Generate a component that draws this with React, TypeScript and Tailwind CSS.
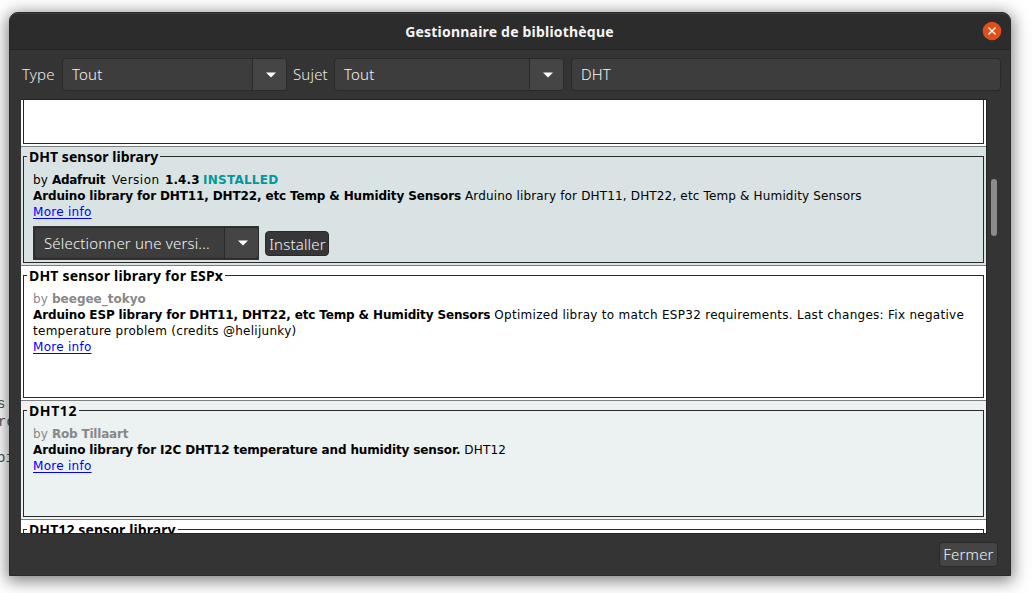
import React from 'react';

const UI = "font-['Noto_Sans','Open_Sans',sans-serif] font-light text-[15px] tracking-[0.17px]";

function Arrow() {
  return (
    <svg width="10" height="6" viewBox="0 0 10 6" className="block">
      <path d="M0 0.5H10L5 5.5Z" fill="#fff" />
    </svg>
  );
}

function Combo({ label, className }: { label: string; className: string }) {
  return (
    <div className={`flex shrink-0 rounded-[4px] border border-[#292929] bg-[#3d3d3d] text-[#f5f5f5] ${className}`}>
      <div className="min-w-0 flex-1 overflow-hidden whitespace-nowrap pl-[9px] leading-[31px]">{label}</div>
      <div className="flex w-[34px] items-center justify-center rounded-r-[3px] border-l border-[#292929] bg-[#454545] pl-[3px]">
        <Arrow />
      </div>
    </div>
  );
}

function B({ children, className = 'tracking-[-0.135px]' }: { children: React.ReactNode; className?: string }) {
  return <b className={`font-bold ${className}`}>{children}</b>;
}

function Row({
  title,
  titleClass,
  className,
  children,
}: {
  title: string;
  titleClass: string;
  className: string;
  children?: React.ReactNode;
}) {
  return (
    <div className={`relative flex shrink-0 flex-col border-b border-[#7c7f7f] px-[2px] pb-[2px] pt-[9px] ${className}`}>
      <div className="flex-1 border border-[#2a2a2a] pl-[9px] pt-[15px] text-[12px] leading-[16px] tracking-[0.16px] text-black">
        {children}
      </div>
      <div
        className={`absolute left-[6px] top-0 bg-inherit px-[2px] font-['Noto_Sans','Open_Sans',sans-serif] text-[14px] font-bold leading-[20px] text-black ${titleClass}`}
      >
        {title}
      </div>
    </div>
  );
}

function MoreInfo() {
  return (
    <div>
      <a className="tracking-[0.28px] text-[#0000ff] underline underline-offset-[2px]">More info</a>
    </div>
  );
}

export default function App() {
  return (
    <div className="relative h-[593px] w-[1034px] overflow-hidden bg-white pl-[9px] pt-[12px]">
      <div className="absolute left-[-3px] top-[395px] font-['Liberation_Mono',monospace] text-[14px] leading-[18px] text-[#4a5560]">
        <div>s</div>
        <div className="pl-px">ro</div>
        <div>&nbsp;</div>
        <div>oi</div>
      </div>

      <div className="relative flex h-[564px] w-[1002px] flex-col rounded-t-[9px] border border-[#2a2a2a] bg-[#343434] shadow-[0_3px_16px_2px_rgba(0,0,0,0.5)]">
        <div className="relative flex h-[37px] shrink-0 items-center justify-center rounded-t-[8px] border-b border-t border-b-[#232323] border-t-[#3c3c3c] bg-[#2c2c2c]">
          <div className="pr-px font-['Noto_Sans','Open_Sans',sans-serif] text-[14px] font-bold tracking-[0.2px] text-[#f5f5f5]">
            Gestionnaire de bibliothèque
          </div>
          <svg width="20" height="20" viewBox="0 0 20 20" className="absolute right-[8px] top-[7px]">
            <circle cx="10" cy="10" r="9.3" fill="#e24e1b" />
            <path d="M6.4 6.4L13.6 13.6M13.6 6.4L6.4 13.6" stroke="#fff" strokeWidth="1.4" />
          </svg>
        </div>

        <div className={`flex h-[49px] shrink-0 items-center pl-[12px] pr-[9px] text-[#ececec] ${UI}`}>
          <span className="w-[40px]">Type</span>
          <Combo label="Tout" className="h-[33px] w-[225px]" />
          <span className="w-[47px] pl-[6px]">Sujet</span>
          <Combo label="Tout" className="h-[33px] w-[230px]" />
          <div className="ml-[7px] h-[33px] flex-1 rounded-[4px] border border-[#292929] bg-[#3d3d3d] pl-[9px] leading-[31px] text-[#f5f5f5]">
            DHT
          </div>
        </div>

        <div className="flex h-[435px] shrink-0 pl-[11px]">
          <div className="flex w-[966px] shrink-0 flex-col overflow-hidden border-b border-r border-t border-[#232323] bg-white font-['DejaVu_Sans',sans-serif]">
            <div className="flex h-[47px] shrink-0 flex-col border-b border-[#7c7f7f] px-[2px] pb-[2px]">
              <div className="flex-1 border border-t-0 border-[#2a2a2a]" />
            </div>
            <Row title="DHT sensor library" titleClass="tracking-[0.04px]" className="h-[119px] bg-[#dae3e3]">
              <div className="flex">
                <span className="w-[19px]">by</span>
                <B className="w-[60px] tracking-[-0.3px]">Adafruit</B>
                <span className="w-[53px] tracking-[0.5px]">Version</span>
                <B className="w-[38px] tracking-[0.1px]">1.4.3</B>
                <B className="tracking-[0.25px] text-[#00979d]">INSTALLED</B>
              </div>
              <div>
                <B>Arduino library for DHT11, DHT22, etc Temp &amp; Humidity Sensors</B> Arduino library for DHT11, DHT22, etc Temp &amp; Humidity Sensors
              </div>
              <MoreInfo />
              <div className={`mt-[6px] flex items-start ${UI}`}>
                <div className="bg-[#343434] py-px pl-px">
                  <Combo label="Sélectionner une versi..." className="h-[32px] w-[225px]" />
                </div>
                <div className="ml-[6px] mt-[5px] flex h-[25px] w-[64px] items-center justify-center rounded-[4px] border border-[#292929] bg-[#373737] pl-px text-[#f5f5f5]">
                  Installer
                </div>
              </div>
            </Row>
            <Row title="DHT sensor library for ESPx" titleClass="tracking-[0.2px]" className="h-[135px] bg-white">
              <div className="text-[#888]">
                by <B className="tracking-[0px]">beegee_tokyo</B>
              </div>
              <div className="tracking-[0.28px]">
                <B>Arduino ESP library for DHT11, DHT22, etc Temp &amp; Humidity Sensors</B> Optimized libray to match ESP32 requirements. Last changes: Fix negative<br />temperature problem (credits @helijunky)
              </div>
              <MoreInfo />
            </Row>
            <Row title="DHT12" titleClass="tracking-[0.6px]" className="h-[119px] bg-[#ecf1f1]">
              <div className="text-[#888]">
                by <B className="tracking-[-0.2px]">Rob Tillaart</B>
              </div>
              <div>
                <B>Arduino library for I2C DHT12 temperature and humidity sensor.</B> DHT12
              </div>
              <MoreInfo />
            </Row>
            <Row title="DHT12 sensor library" titleClass="tracking-[0.1px]" className="h-[119px] bg-white" />
          </div>
          <div className="ml-[4px] mt-[80px] h-[57px] w-[6px] rounded-full bg-[#8b8b8b]" />
        </div>

        <div className="flex flex-1 items-center justify-end pr-[12px]">
          <div className={`flex h-[25px] w-[59px] items-center justify-center rounded-[4px] border border-[#2a2a2a] bg-[#454545] text-[#f5f5f5] ${UI}`}>
            Fermer
          </div>
        </div>
      </div>
    </div>
  );
}
